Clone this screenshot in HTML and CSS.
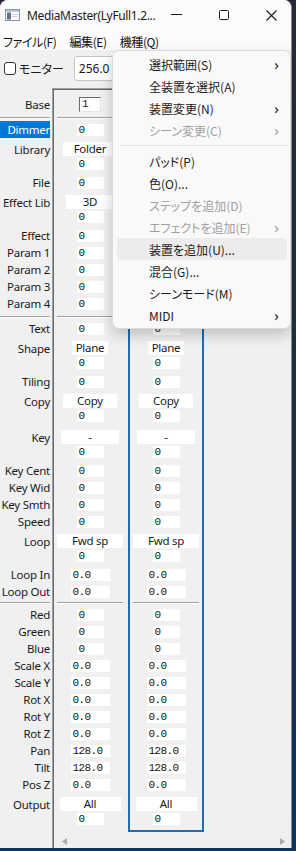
FILE: index.html
```html
<!DOCTYPE html>
<html lang="ja">
<head>
    <meta charset="UTF-8">
    <title>MediaMaster</title>
    <link rel="stylesheet" href="styles.css">
</head>
<body>
<div class="window">
    <div class="titlebar">
        <svg class="app-icon" width="15" height="12" viewBox="0 0 15 12">
            <rect x="0.5" y="0.5" width="14" height="11" fill="#fff" stroke="#8a96a3"/>
            <rect x="1" y="1" width="13" height="2" fill="#b9c6d3"/>
            <rect x="2" y="3.5" width="4" height="7" fill="#5d7384"/>
            <rect x="7" y="5" width="6" height="1" fill="#c6ced6"/>
            <rect x="7" y="7" width="5" height="1" fill="#c6ced6"/>
        </svg>
        <span class="title">MediaMaster(LyFull1.2...</span>
        <span class="cap cap-min"><svg width="11" height="2"><rect width="11" height="1" fill="#1a1a1a"/></svg></span>
        <span class="cap cap-max"><svg width="10" height="10"><rect x="0.5" y="0.5" width="9" height="9" rx="1" fill="none" stroke="#1a1a1a"/></svg></span>
        <span class="cap cap-close"><svg width="11" height="11"><path d="M0.5 0.5L10.5 10.5M10.5 0.5L0.5 10.5" stroke="#1a1a1a" stroke-width="1.1"/></svg></span>
    </div>

    <div class="menubar">
        <span>ファイル(F)</span>
        <span>編集(E)</span>
        <span>機種(Q)</span>
    </div>

    <div class="toolbar">
        <label class="check"><span class="box"></span>モニター</label>
        <div class="select">256.0
            <svg class="chev" width="8" height="5"><path d="M0.5 0.5L4 4L7.5 0.5" fill="none" stroke="#555"/></svg>
        </div>
    </div>

    <div class="main">
        <div class="labels">
            <div class="r">Base</div>
            <div class="sep"></div>
            <div class="r hl">Dimmer</div>
            <div class="g"><div class="r">Library</div></div>
            <div class="r">File</div>
            <div class="g"><div class="r">Effect Lib</div></div>
            <div class="r">Effect</div>
            <div class="r">Param 1</div>
            <div class="r">Param 2</div>
            <div class="r">Param 3</div>
            <div class="r">Param 4</div>
            <div class="sep"></div>
            <div class="r">Text</div>
            <div class="g"><div class="r">Shape</div></div>
            <div class="r">Tiling</div>
            <div class="g"><div class="r">Copy</div></div>
            <div class="g"><div class="r">Key</div></div>
            <div class="r">Key Cent</div>
            <div class="r">Key Wid</div>
            <div class="r">Key Smth</div>
            <div class="r">Speed</div>
            <div class="g"><div class="r">Loop</div></div>
            <div class="r">Loop In</div>
            <div class="r">Loop Out</div>
            <div class="sep sep-sm"></div>
            <div class="r">Red</div>
            <div class="r">Green</div>
            <div class="r">Blue</div>
            <div class="r">Scale X</div>
            <div class="r">Scale Y</div>
            <div class="r">Rot X</div>
            <div class="r">Rot Y</div>
            <div class="r">Rot Z</div>
            <div class="r">Pan</div>
            <div class="r">Tilt</div>
            <div class="r">Pos Z</div>
            <div class="g"><div class="r">Output</div></div>
        </div>

        <div class="scroll">
            <div class="cols">
                <div class="col">
                    <div class="r"><span class="base-in">1</span></div>
                    <div class="sep"></div>
                    <div class="r"><span class="n">0</span></div>
                    <div class="g"><span class="c c-folder">Folder</span><span class="n">0</span></div>
                    <div class="r"><span class="n">0</span></div>
                    <div class="g"><span class="c c-3d">3D</span><span class="n">0</span></div>
                    <div class="r"><span class="n">0</span></div>
                    <div class="r"><span class="n">0</span></div>
                    <div class="r"><span class="n">0</span></div>
                    <div class="r"><span class="n">0</span></div>
                    <div class="r"><span class="n">0</span></div>
                    <div class="sep"></div>
                    <div class="r"><span class="n">0</span></div>
                    <div class="g"><span class="c c-plane">Plane</span><span class="n">0</span></div>
                    <div class="r"><span class="n">0</span></div>
                    <div class="g"><span class="c c-copy">Copy</span><span class="n">0</span></div>
                    <div class="g"><span class="c c-key">-</span><span class="n">0</span></div>
                    <div class="r"><span class="n">0</span></div>
                    <div class="r"><span class="n">0</span></div>
                    <div class="r"><span class="n">0</span></div>
                    <div class="r"><span class="n">0</span></div>
                    <div class="g"><span class="c c-loop">Fwd sp</span><span class="n">0</span></div>
                    <div class="r"><span class="n wide">0.0</span></div>
                    <div class="r"><span class="n wide">0.0</span></div>
                    <div class="sep sep-sm"></div>
                    <div class="r"><span class="n">0</span></div>
                    <div class="r"><span class="n">0</span></div>
                    <div class="r"><span class="n">0</span></div>
                    <div class="r"><span class="n wide">0.0</span></div>
                    <div class="r"><span class="n wide">0.0</span></div>
                    <div class="r"><span class="n wide">0.0</span></div>
                    <div class="r"><span class="n wide">0.0</span></div>
                    <div class="r"><span class="n wide">0.0</span></div>
                    <div class="r"><span class="n wide">128.0</span></div>
                    <div class="r"><span class="n wide">128.0</span></div>
                    <div class="r"><span class="n wide">0.0</span></div>
                    <div class="g"><span class="c c-all">All</span><span class="n">0</span></div>
                </div>

                <!-- upper rows of this column sit under the open menu -->
                <div class="col selected">
                    <div class="r"><span class="base-in"></span></div>
                    <div class="sep"></div>
                    <div class="r"><span class="n"></span></div>
                    <div class="g"><span class="c c-folder"></span><span class="n"></span></div>
                    <div class="r"><span class="n"></span></div>
                    <div class="g"><span class="c c-3d"></span><span class="n"></span></div>
                    <div class="r"><span class="n"></span></div>
                    <div class="r"><span class="n"></span></div>
                    <div class="r"><span class="n"></span></div>
                    <div class="r"><span class="n"></span></div>
                    <div class="r"><span class="n"></span></div>
                    <div class="sep"></div>
                    <div class="r"><span class="n">0</span></div>
                    <div class="g"><span class="c c-plane">Plane</span><span class="n">0</span></div>
                    <div class="r"><span class="n">0</span></div>
                    <div class="g"><span class="c c-copy">Copy</span><span class="n">0</span></div>
                    <div class="g"><span class="c c-key">-</span><span class="n">0</span></div>
                    <div class="r"><span class="n">0</span></div>
                    <div class="r"><span class="n">0</span></div>
                    <div class="r"><span class="n">0</span></div>
                    <div class="r"><span class="n">0</span></div>
                    <div class="g"><span class="c c-loop">Fwd sp</span><span class="n">0</span></div>
                    <div class="r"><span class="n wide">0.0</span></div>
                    <div class="r"><span class="n wide">0.0</span></div>
                    <div class="sep sep-sm"></div>
                    <div class="r"><span class="n">0</span></div>
                    <div class="r"><span class="n">0</span></div>
                    <div class="r"><span class="n">0</span></div>
                    <div class="r"><span class="n wide">0.0</span></div>
                    <div class="r"><span class="n wide">0.0</span></div>
                    <div class="r"><span class="n wide">0.0</span></div>
                    <div class="r"><span class="n wide">0.0</span></div>
                    <div class="r"><span class="n wide">0.0</span></div>
                    <div class="r"><span class="n wide">128.0</span></div>
                    <div class="r"><span class="n wide">128.0</span></div>
                    <div class="r"><span class="n wide">0.0</span></div>
                    <div class="g"><span class="c c-all">All</span><span class="n">0</span></div>
                </div>
            </div>
            <div class="hscroll">
                <svg class="arrow-l" width="5" height="7"><path d="M5 0L0 3.5L5 7Z" fill="#ababab"/></svg>
                <svg class="arrow-r" width="5" height="7"><path d="M0 0L5 3.5L0 7Z" fill="#ababab"/></svg>
            </div>
        </div>
    </div>

    <!-- open 機種 menu -->
    <div class="menu">
        <div class="mi">選択範囲(S)<span class="sub">›</span></div>
        <div class="mi">全装置を選択(A)</div>
        <div class="mi">装置変更(N)<span class="sub">›</span></div>
        <div class="mi off">シーン変更(C)<span class="sub">›</span></div>
        <div class="msep"></div>
        <div class="mi">パッド(P)</div>
        <div class="mi">色(O)...</div>
        <div class="mi off">ステップを追加(D)</div>
        <div class="mi off">エフェクトを追加(E)<span class="sub">›</span></div>
        <div class="mi hover">装置を追加(U)...</div>
        <div class="mi">混合(G)...</div>
        <div class="mi">シーンモード(M)</div>
        <div class="mi">MIDI<span class="sub">›</span></div>
    </div>
</div>
</body>
</html>
```

FILE: styles.css
```css
* {
    box-sizing: border-box;
}
body {
    margin: 0;
    width: 296px;
    height: 851px;
    overflow: hidden;
    background: linear-gradient(#232a35, #10345c);
    font-family: "Noto Sans", "Noto Sans CJK JP", sans-serif;
    font-size: 11.5px;
    letter-spacing: -0.25px;
    color: #1a1a1a;
}
.window {
    position: relative;
    width: 292px;
    height: 848px;
    background: #f0f0f0;
    border-right: 1px solid #8c8c8c;
    border-radius: 8px 8px 0 0;
    overflow: hidden;
    display: flex;
    flex-direction: column;
}

/* title bar */
.titlebar {
    height: 32px;
    flex: none;
    background: #fbfbfb;
    display: flex;
    align-items: center;
    padding-bottom: 2px;
}
.app-icon {
    margin-left: 5px;
    flex: none;
}
.title {
    flex: 1;
    min-width: 0;
    margin-left: 7px;
    font-size: 12px;
    letter-spacing: -0.35px;
    white-space: nowrap;
}
.cap {
    height: 30px;
    display: flex;
    align-items: center;
    justify-content: center;
    flex: none;
}
.cap-min {
    width: 47px;
}
.cap-max {
    width: 47px;
}
.cap-close {
    width: 44px;
    padding-left: 4px;
}

/* menu bar */
.menubar {
    height: 18px;
    flex: none;
    background: #fbfbfb;
    display: flex;
    align-items: center;
    gap: 13px;
    padding-left: 3px;
    font-family: "Noto Sans CJK JP", sans-serif;
    font-feature-settings: "palt";
    font-size: 12px;
    letter-spacing: -0.4px;
    color: #111;
}

/* toolbar */
.toolbar {
    height: 36px;
    flex: none;
    display: flex;
    align-items: center;
    padding-left: 4px;
    font-family: "Noto Sans CJK JP", sans-serif;
    font-feature-settings: "palt";
    font-size: 12px;
    letter-spacing: 0;
}
.check {
    display: flex;
    align-items: center;
}
.box {
    width: 12px;
    height: 13px;
    margin-right: 3px;
    background: #fff;
    border: 1px solid #333;
    border-radius: 3px;
}
.select {
    margin-left: 10px;
    width: 62px;
    height: 25px;
    display: flex;
    align-items: center;
    padding-left: 4px;
    background: #fff;
    border: 1px solid #c4c4c4;
    border-radius: 3px;
    font-family: "Noto Sans", sans-serif;
}
.chev {
    margin-left: auto;
    margin-right: 2px;
}

/* parameter area */
.main {
    flex: 1;
    display: flex;
    margin-top: 2px;
    min-height: 0;
}
.labels {
    width: 52px;
    flex: none;
    padding: 8px 2px 0 0;
}
.r {
    height: 17px;
    display: flex;
    align-items: center;
    white-space: nowrap;
}
.g {
    height: 36px;
}
.labels .r {
    justify-content: flex-end;
}
.labels .g .r {
    height: 22px;
}
.labels .hl {
    background: #0078d7;
    color: #fff;
}
.sep {
    height: 8px;
    padding-top: 4px;
}
.sep::before {
    content: "";
    display: block;
    height: 1px;
    background: #a0a0a0;
    border-bottom: 1px solid #fff;
    box-sizing: content-box;
}
.sep-sm {
    height: 6px;
    padding-top: 2px;
}

.scroll {
    flex: 1;
    display: flex;
    flex-direction: column;
    border-top: 1px solid #a0a0a0;
    border-left: 1px solid #a0a0a0;
    box-shadow: inset 1px 1px 0 #696969;
}
.cols {
    flex: 1;
    display: flex;
    align-items: flex-start;
    padding: 7px 0 0 1px;
}
.col {
    width: 72px;
    margin-right: 2px;
}
.col.selected {
    width: 76px;
    margin-top: -2px;
    padding-bottom: 1px;
    border: 2px solid #1e6cb4;
}
.col .r {
    justify-content: center;
}
.col .g {
    display: flex;
    flex-direction: column;
    align-items: center;
    gap: 2px;
    padding-top: 4px;
}
.col .sep {
    margin: 0 3px;
}
.base-in {
    width: 22px;
    height: 15px;
    padding-left: 2px;
    background: #fff;
    border: 1px solid #e3e3e3;
    border-top-color: #6a6a6a;
    border-left-color: #6a6a6a;
    font-family: "Liberation Mono", monospace;
    font-size: 11px;
    line-height: 13px;
}
.n {
    width: 27px;
    height: 12px;
    padding-left: 2px;
    background: #fff;
    font-family: "Liberation Mono", monospace;
    font-size: 11px;
    line-height: 12px;
    letter-spacing: -0.6px;
    color: #111;
}
.n.wide {
    width: 39px;
}
.c {
    height: 14px;
    line-height: 14px;
    text-align: center;
    background: #fff;
}
.c-folder { width: 54px; }
.c-3d { width: 48px; }
.c-plane { width: 36px; }
.c-copy { width: 54px; }
.c-key { width: 58px; }
.c-loop { width: 66px; }
.c-all { width: 61px; }

.hscroll {
    height: 14px;
    flex: none;
    display: flex;
    align-items: center;
    justify-content: space-between;
    padding: 0 6px 0 9px;
}

/* dropdown menu */
.menu {
    position: absolute;
    left: 112px;
    top: 50px;
    width: 179px;
    padding: 2px 3px 2px 4px;
    background: #f9f9f9;
    border: 1px solid #dcdcdc;
    border-radius: 7px;
    box-shadow: 0 6px 14px rgba(0, 0, 0, 0.2);
    font-family: "Noto Sans CJK JP", sans-serif;
    font-feature-settings: "palt";
    font-size: 12px;
    letter-spacing: 0;
    color: #1b1b1b;
}
.mi {
    height: 22px;
    display: flex;
    align-items: center;
    padding: 0 8px 0 32px;
    border-radius: 4px;
    white-space: nowrap;
}
.mi.off {
    color: #a0a0a0;
}
.mi.hover {
    background: #ececec;
}
.sub {
    margin-left: auto;
    font-family: "Noto Sans", sans-serif;
    font-size: 15px;
}
.msep {
    height: 9px;
    padding-top: 4px;
    margin: 0 0 0 3px;
}
.msep::before {
    content: "";
    display: block;
    height: 1px;
    background: #e0e0e0;
}
```
